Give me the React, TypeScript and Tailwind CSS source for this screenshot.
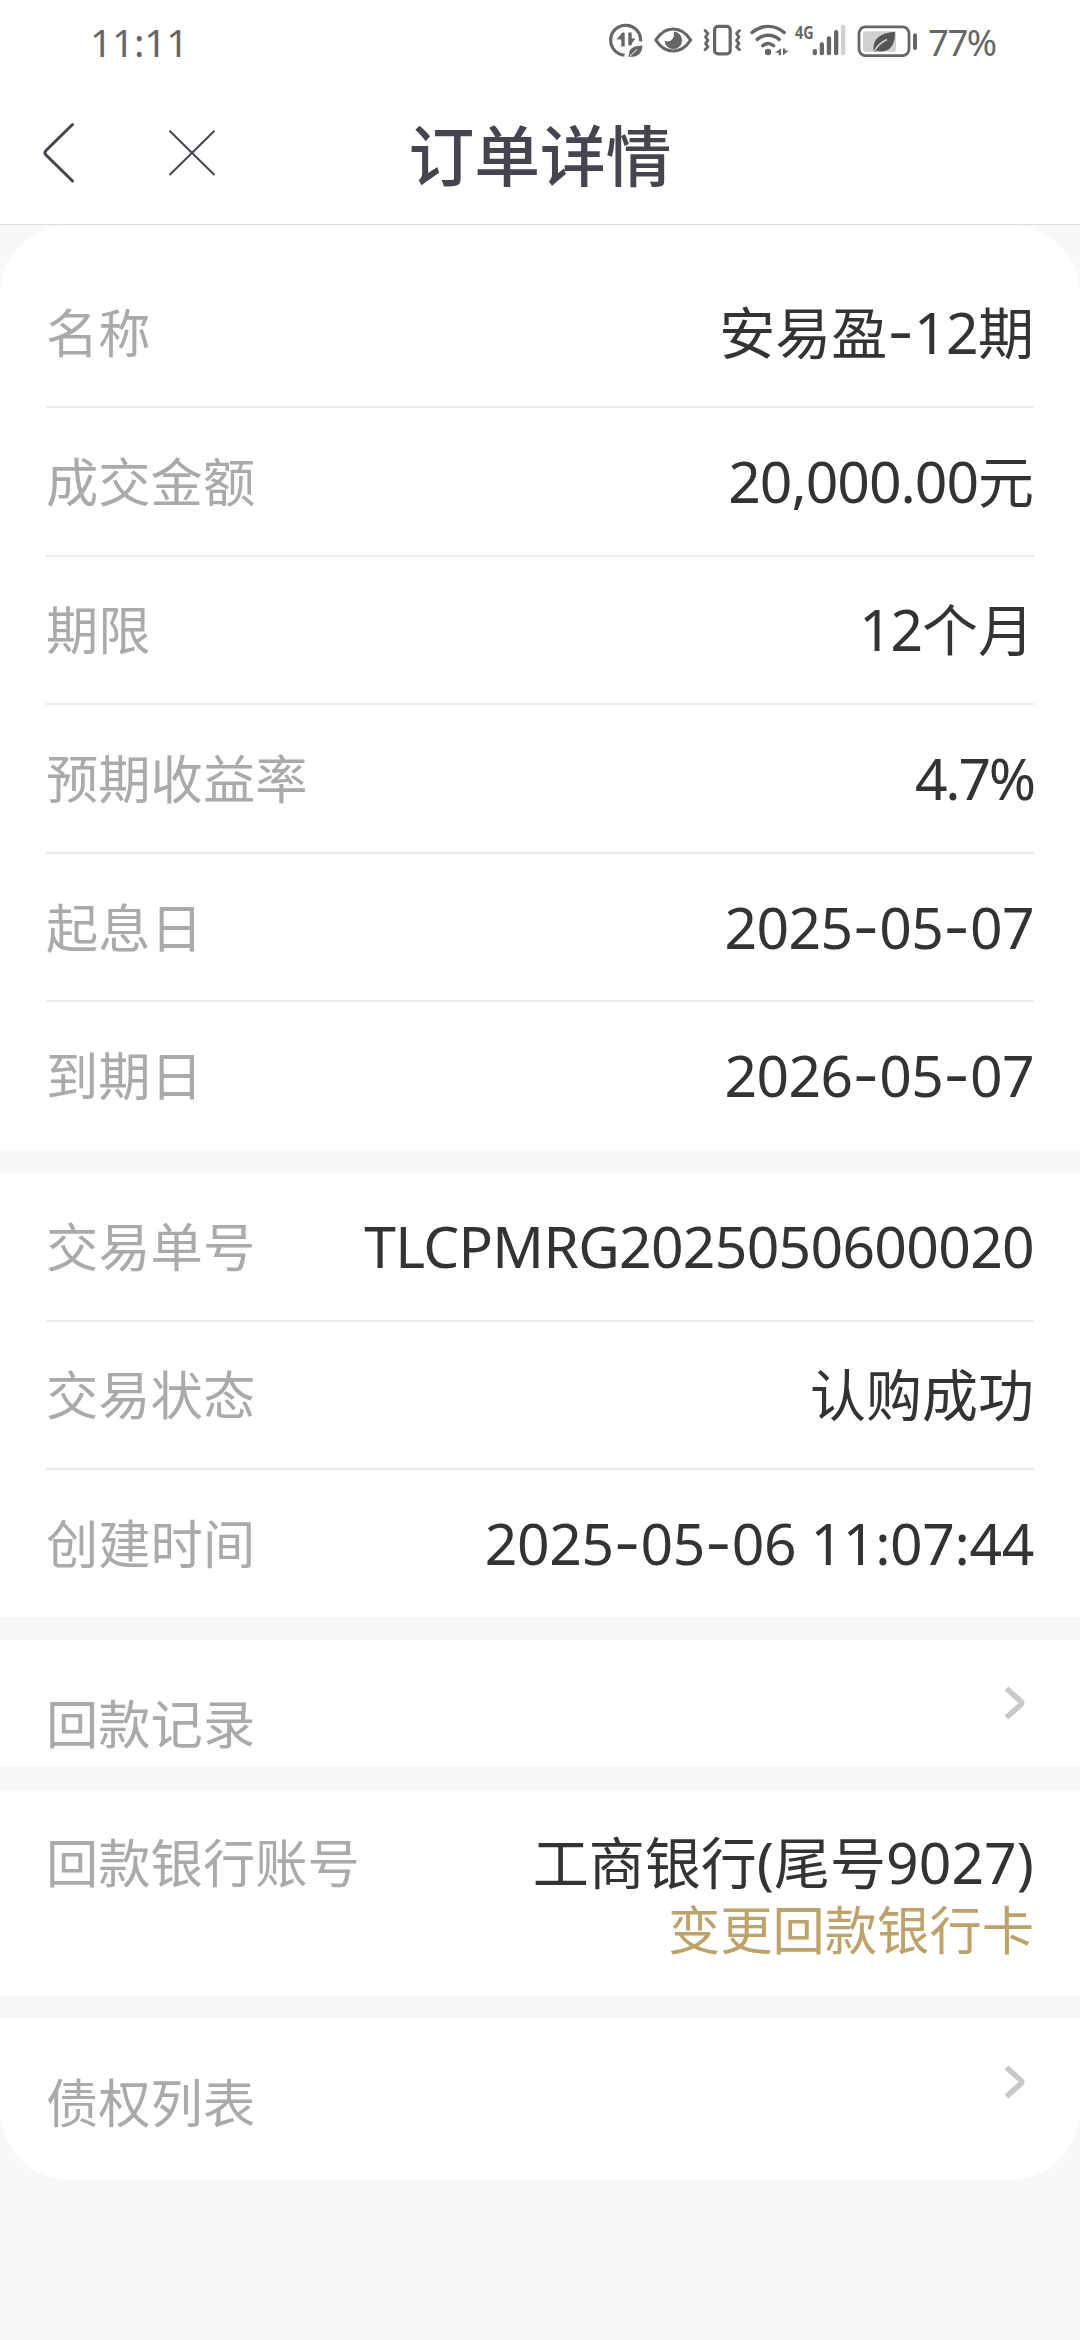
import type { ReactNode } from "react"
import clsx from "clsx"

interface RowProps {
  label: string
  value: string
  valueClassName?: string
  last?: boolean
}

const orderRows: RowProps[] = [
  { label: "名称", value: "安易盈-12期" },
  { label: "成交金额", value: "20,000.00元", valueClassName: "tracking-[-1px]" },
  { label: "期限", value: "12个月", valueClassName: "tracking-[-1.2px]" },
  { label: "预期收益率", value: "4.7%", valueClassName: "tracking-[-2.2px]" },
  { label: "起息日", value: "2025-05-07" },
  { label: "到期日", value: "2026-05-07" },
]

const tradeRows: RowProps[] = [
  { label: "交易单号", value: "TLCPMRG2025050600020", valueClassName: "tracking-[-0.68px]" },
  { label: "交易状态", value: "认购成功" },
  { label: "创建时间", value: "2025-05-06 11:07:44", valueClassName: "tracking-[-0.35px]" },
]

function DataSaverIcon() {
  return (
    <svg className="w-[40px] h-[40px]" viewBox="605 20 40 40" fill="none" stroke="#666" strokeWidth="3.2">
      <path d="M624.5 55.2A15 15 0 1 1 640.6 41.5" />
      <path d="M623 33v13.5M630 32.5v12.5" strokeWidth="3.4" />
      <path d="M623.5 31.5v8h-7zM629.5 46.5v-8h6z" fill="#666" stroke="none" />
      <path d="M642.5 45.5c-7 .2-13 1.8-13.2 7.5l-1 3.5 2.2.3c7.5.2 11.500-3 12-11.300z" fill="#666" stroke="none" />
      <path d="M630 56l7-6.500" stroke="#fff" strokeWidth="1" />
    </svg>
  )
}

function EyeIcon() {
  return (
    <svg className="w-[44px] h-[40px]" viewBox="651 20 44 40">
      <path
        d="M655.8 40c4.500-7.200 10.500-11 17.400-11s12.900 3.800 17.400 11c-4.500 7.200-10.500 11-17.400 11s-12.900-3.800-17.400-11z"
        fill="none"
        stroke="#666"
        strokeWidth="3.2"
        strokeLinejoin="round"
      />
      <path d="M673.5 31.500a8.800 8.800 0 1 1-9 9.200c2.700 1.200 5.500.8 7.300-1 2.300-2.300 2.600-5.400 1.700-8.200z" fill="#666" />
    </svg>
  )
}

function VibrateIcon() {
  return (
    <svg className="w-[44px] h-[40px]" viewBox="700 20 44 40" fill="none" stroke="#666" strokeWidth="3.2">
      <rect x="714.6" y="26.3" width="15.6" height="27.6" rx="3.5" />
      <path
        d="M705 30.500l3 3-2.500 3.500 2.500 3.300-2.500 3.400 2.500 3.100-3 3M739.500 30.500l-3 3 2.500 3.500-2.500 3.300 2.500 3.400-2.500 3.100 3 3"
        strokeWidth="2.8"
        strokeLinecap="round"
        strokeLinejoin="round"
      />
    </svg>
  )
}

function WifiIcon() {
  return (
    <svg className="w-[48px] h-[40px]" viewBox="746 20 48 40" fill="none" stroke="#666" strokeLinecap="round">
      <path d="M752 32.500c9.500-8.200 23-8.200 32.200 0M757.200 39.400c6.500-5.500 15.500-5.500 22 0M762.800 45.700c3.300-2.700 7.500-2.700 10.800 0" strokeWidth="3.4" />
      <circle cx="768" cy="52" r="3.2" fill="#666" stroke="none" />
      <path d="M781 48.500v6.800h-2.200v-2.500h-4zM783 55.300v-6.800h2.200v2.200h3.500z" fill="#666" stroke="none" />
    </svg>
  )
}

function SignalIcon() {
  return (
    <svg className="w-[34px] h-[40px]" viewBox="812 20 34 40" fill="#666">
      <rect x="812.7" y="49" width="4.3" height="6.3" rx="2" />
      <rect x="819.7" y="42.3" width="4.3" height="13" rx="2" />
      <rect x="826.8" y="36.3" width="4.3" height="19" rx="2" />
      <rect x="834" y="30" width="4.3" height="25.3" rx="2" />
      <rect x="841" y="24.7" width="4.3" height="30.6" rx="2" fill="#d0d0d0" />
    </svg>
  )
}

function BatteryIcon() {
  return (
    <svg className="w-[64px] h-[40px]" viewBox="856 20 64 40">
      <rect x="859" y="26.8" width="50" height="28.8" rx="6.5" fill="none" stroke="#666" strokeWidth="2.8" />
      <rect x="863" y="31.3" width="33" height="20.4" rx="2.5" fill="#d0d0d0" />
      <rect x="913" y="33.3" width="4" height="16.7" rx="2" fill="#666" />
      <path d="M894.8 31.800c.8 10-3 19.500-13 19.700-1.800.2-3.300-.2-4.800-.8l-1.500 1.200-2-1.200c-.8-12 6.500-17.500 21.300-18.900z" fill="#555" />
      <path d="M874.5 51c3-5.500 7-9 12.500-11.500" fill="none" stroke="#d0d0d0" strokeWidth="1.5" />
    </svg>
  )
}

function StatusBar() {
  return (
    <div className="flex h-[84px] items-start pt-[20px] pl-[90px] font-['Noto_Sans',sans-serif] text-[#666]">
      <span className="w-[515px] text-[39px] leading-[44px] tracking-[-0.3px]">11:11</span>
      <DataSaverIcon />
      <div className="ml-[6px] flex">
        <EyeIcon />
      </div>
      <div className="ml-[5px] flex">
        <VibrateIcon />
      </div>
      <div className="ml-[2px] flex">
        <WifiIcon />
      </div>
      <div className="ml-[1px] w-[17px]">
        <span className="block w-[24px] origin-left scale-x-[0.78] text-[18.500px] leading-[24px] font-bold">4G</span>
      </div>
      <SignalIcon />
      <div className="ml-[10px] flex">
        <BatteryIcon />
      </div>
      <span className="ml-[8px] text-[36.500px] leading-[45px] tracking-[-1.500px]">77%</span>
    </div>
  )
}

function NavBar() {
  return (
    <header className="grid h-[141px] grid-cols-[1fr_auto_1fr] items-start border-b border-[#dedede]">
      <div className="flex pt-[34px] pl-[38px]">
        <button aria-label="返回">
          <svg className="w-[40px] h-[70px]" viewBox="38 118 40 70" fill="none" stroke="#454550" strokeWidth="3">
            <path d="M72.500 124.500L46 150.500Q43.800 152.700 46 155L72.500 181" strokeLinecap="round" />
          </svg>
        </button>
        <button aria-label="关闭" className="ml-[84px]">
          <svg className="w-[60px] h-[70px]" viewBox="162 118 60 70" fill="none" stroke="#454550" strokeWidth="2">
            <path d="M169.500 130.800L214.500 175M214.500 130.800L169.500 175" />
          </svg>
        </button>
      </div>
      <h1 className="pt-[29px] text-[65.800px] leading-[80px] font-medium text-[#454550]">订单详情</h1>
    </header>
  )
}

// Latin runs and hyphens are set apart from the Chinese text, each in its own face
function Value({ text, className }: { text: string; className?: string }) {
  const runs = text.match(/-|[\x20-\x2c\x2e-\x7e]+|[^\x20-\x7e]+/g) || []

  return (
    <span className="block text-[56px] leading-[66px] whitespace-nowrap text-[#333]">
      {runs.map((run, i) => {
        if (run === "-") {
          return (
            <span key={i} className="font-['Inter',sans-serif] text-[58px] leading-none">
              {run}
            </span>
          )
        }
        if (/^[\x20-\x7e]/.test(run)) {
          return (
            <span key={i} className={clsx("font-['Noto_Sans',sans-serif] text-[57px] leading-none", className || "tracking-[-0.6px]")}>
              {run}
            </span>
          )
        }
        return <span key={i}>{run}</span>
      })}
    </span>
  )
}

function Label({ children }: { children: ReactNode }) {
  return <span className="text-[52.300px] leading-[72px] whitespace-nowrap text-[#aaa]">{children}</span>
}

function Row({ label, value, valueClassName, last }: RowProps) {
  return (
    <div
      className={clsx(
        "mx-[46px] flex items-center justify-between pb-[5px]",
        last ? "h-[147px]" : "h-[148.600px] border-b-2 border-[#ebebeb]"
      )}
    >
      <Label>{label}</Label>
      <Value text={value} className={valueClassName} />
    </div>
  )
}

function Chevron() {
  return (
    <svg className="w-[24px] h-[36px]" viewBox="0 0 24 36" fill="none" stroke="#c8c8c8" strokeWidth="5.5">
      <path d="M3.500 3.500L18 16.500Q19.300 18 18 19.500L3.500 32.500" />
    </svg>
  )
}

export default function App() {
  return (
    <div className="h-[2340px] w-[1080px] overflow-hidden bg-[#f8f8f8] font-['Noto_Sans_CJK_SC',sans-serif]">
      <div className="bg-white">
        <StatusBar />
        <NavBar />
      </div>

      <main className="flex h-[1955px] flex-col gap-[23px] overflow-hidden rounded-[70px]">
        <section className="h-[925px] bg-white pt-[34.400px]">
          {orderRows.map((row, i) => (
            <Row key={row.label} {...row} last={i === orderRows.length - 1} />
          ))}
        </section>

        <section className="h-[444px] bg-white">
          {tradeRows.map((row, i) => (
            <Row key={row.label} {...row} last={i === tradeRows.length - 1} />
          ))}
        </section>

        <section className="flex h-[127px] justify-between bg-white pt-[45px] pr-[53px] pl-[46px]">
          <Label>回款记录</Label>
          <Chevron />
        </section>

        <section className="flex h-[206px] justify-between bg-white px-[46px] pt-[34px]">
          <Label>回款银行账号</Label>
          <div className="flex flex-col items-end pt-[3px]">
            <Value text="工商银行(尾号9027)" className="tracking-[0.1px]" />
            <button className="mt-[1px] text-[52.300px] leading-[66px] text-[#bda269]">变更回款银行卡</button>
          </div>
        </section>

        <section className="flex h-[161px] justify-between bg-white pt-[45px] pr-[53px] pl-[46px]">
          <Label>债权列表</Label>
          <Chevron />
        </section>
      </main>
    </div>
  )
}
